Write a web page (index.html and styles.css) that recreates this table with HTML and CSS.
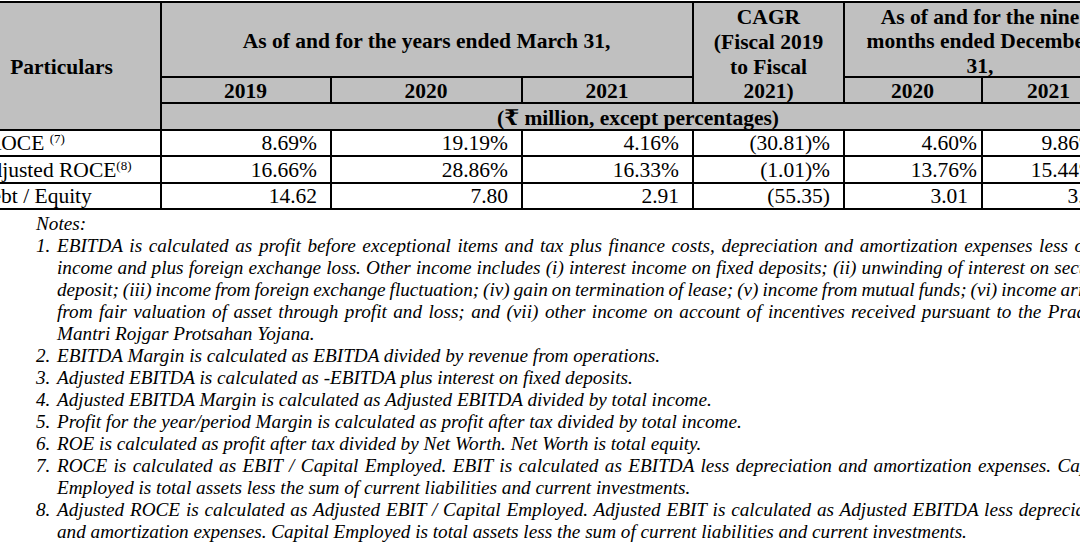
FILE: index.html
```html
<!DOCTYPE html>
<html lang="en">
<head>
<meta charset="utf-8">
<title>Key ratios</title>
<link rel="stylesheet" href="styles.css">
</head>
<body>
<div class="page">
  <table class="fin">
    <colgroup>
      <col class="c-part">
      <col class="c-2019">
      <col class="c-2020">
      <col class="c-2021">
      <col class="c-cagr">
      <col class="c-n2020">
      <col class="c-n2021">
    </colgroup>
    <thead>
      <tr class="r1">
        <th rowspan="3">Particulars</th>
        <th colspan="3">As of and for the years ended March 31,</th>
        <th rowspan="2" class="cagr"><span class="t">CAGR<br>(Fiscal 2019<br>to Fiscal<br>2021)</span></th>
        <th colspan="2" class="nine"><span class="t">As of and for the nine<br>months ended December<br>31,</span></th>
      </tr>
      <tr class="r2">
        <th>2019</th>
        <th>2020</th>
        <th>2021</th>
        <th>2020</th>
        <th>2021</th>
      </tr>
      <tr class="r3">
        <th colspan="6">(₹ million, except percentages)</th>
      </tr>
    </thead>
    <tbody>
      <tr class="r4">
        <td class="label indent">ROCE <sup>(7)</sup></td>
        <td>8.69%</td>
        <td>19.19%</td>
        <td>4.16%</td>
        <td>(30.81)%</td>
        <td class="tight">4.60%</td>
        <td class="wide">9.86%</td>
      </tr>
      <tr class="r5">
        <td class="label">Adjusted ROCE<sup>(8)</sup></td>
        <td>16.66%</td>
        <td>28.86%</td>
        <td>16.33%</td>
        <td>(1.01)%</td>
        <td class="tight">13.76%</td>
        <td class="wide">15.44%</td>
      </tr>
      <tr class="r6">
        <td class="label">Debt / Equity</td>
        <td>14.62</td>
        <td>7.80</td>
        <td>2.91</td>
        <td>(55.35)</td>
        <td>3.01</td>
        <td class="edge">3.15</td>
      </tr>
    </tbody>
  </table>

  <div class="notes">
    <p class="notes-title">Notes:</p>
    <div class="note">
      <span class="num">1.</span>
      <p class="txt"><span class="ln">EBITDA is calculated as profit before exceptional items and tax plus finance costs, depreciation and amortization expenses less other</span><span class="ln">income and plus foreign exchange loss. Other income includes (i) interest income on fixed deposits; (ii) unwinding of interest on security</span><span class="ln">deposit; (iii) income from foreign exchange fluctuation; (iv) gain on termination of lease; (v) income from mutual funds; (vi) income arising</span><span class="ln">from fair valuation of asset through profit and loss; and (vii) other income on account of incentives received pursuant to the Pradhan</span><span class="last">Mantri Rojgar Protsahan Yojana.</span></p>
    </div>
    <div class="note">
      <span class="num">2.</span>
      <p class="txt">EBITDA Margin is calculated as EBITDA divided by revenue from operations.</p>
    </div>
    <div class="note">
      <span class="num">3.</span>
      <p class="txt">Adjusted EBITDA is calculated as -EBITDA plus interest on fixed deposits.</p>
    </div>
    <div class="note">
      <span class="num">4.</span>
      <p class="txt">Adjusted EBITDA Margin is calculated as Adjusted EBITDA divided by total income.</p>
    </div>
    <div class="note">
      <span class="num">5.</span>
      <p class="txt">Profit for the year/period Margin is calculated as profit after tax divided by total income.</p>
    </div>
    <div class="note">
      <span class="num">6.</span>
      <p class="txt">ROE is calculated as profit after tax divided by Net Worth. Net Worth is total equity.</p>
    </div>
    <div class="note">
      <span class="num">7.</span>
      <p class="txt"><span class="ln">ROCE is calculated as EBIT / Capital Employed. EBIT is calculated as EBITDA less depreciation and amortization expenses. Capital</span><span class="last">Employed is total assets less the sum of current liabilities and current investments.</span></p>
    </div>
    <div class="note">
      <span class="num">8.</span>
      <p class="txt"><span class="ln">Adjusted ROCE is calculated as Adjusted EBIT / Capital Employed. Adjusted EBIT is calculated as Adjusted EBITDA less depreciation</span><span class="last">and amortization expenses. Capital Employed is total assets less the sum of current liabilities and current investments.</span></p>
    </div>
  </div>
</div>
</body>
</html>
```

FILE: styles.css
```css
html, body {
  margin: 0;
  padding: 0;
  background: #ffffff;
  overflow: hidden;
}

body {
  font-family: "Liberation Serif", "Times New Roman", "DejaVu Serif", serif;
  color: #000000;
}

.page {
  width: 1155px;
  margin-left: -38px;
  padding-top: 1px;
}

/* ---------- table ---------- */
.fin {
  width: 1155px;
  table-layout: fixed;
  border-collapse: separate;
  border-spacing: 0;
  border-top: 2px solid #000;
  border-left: 2px solid #000;
}

.c-part  { width: 198px; }
.c-2019  { width: 170px; }
.c-2020  { width: 191px; }
.c-2021  { width: 171px; }
.c-cagr  { width: 151px; }
.c-n2020 { width: 138px; }
.c-n2021 { width: 134px; }

.fin th,
.fin td {
  box-sizing: border-box;
  border-right: 2px solid #000;
  border-bottom: 2px solid #000;
  padding: 0 13px 0 12px;
  vertical-align: middle;
  font-size: 21.5px;
  white-space: nowrap;
  overflow: hidden;
}

.fin th {
  background: #c0c0c0;
  font-weight: bold;
  text-align: center;
  line-height: 22px;
  padding-top: 2px;
}

.fin th.cagr {
  line-height: 24.7px;
  padding: 0;
}

.fin th.nine {
  line-height: 24.3px;
  padding: 0;
}

.fin th .t {
  position: relative;
  top: 2px;
}

.fin td {
  text-align: right;
  line-height: 23px;
  padding-top: 1px;
}

.fin td.label {
  text-align: left;
  padding-left: 12px;
}

.fin td.indent {
  padding-left: 23px;
}

.fin td.tight { padding-right: 4px; }
.fin td.wide  { padding-right: 18px; }
.fin td.edge  { padding-right: 10px; }

.fin sup {
  font-size: 13px;
  line-height: 0;
  vertical-align: 7px;
}

.r1 { height: 75px; }
.r2 { height: 26px; }
.r3 { height: 27px; }
.r4 { height: 25px; }
.r5 { height: 27px; }
.r6 { height: 26px; }

/* ---------- notes ---------- */
.notes {
  margin-left: 74px;
  padding-top: 3px;
  font-style: italic;
  font-size: 19.2px;
  line-height: 22px;
}

.notes p {
  margin: 0;
}

.note {
  display: grid;
  grid-template-columns: 21px 1058px;
}

.txt .ln {
  display: block;
  text-align: justify;
  text-align-last: justify;
  word-spacing: -3px;
}

.txt .last {
  display: block;
}
```
